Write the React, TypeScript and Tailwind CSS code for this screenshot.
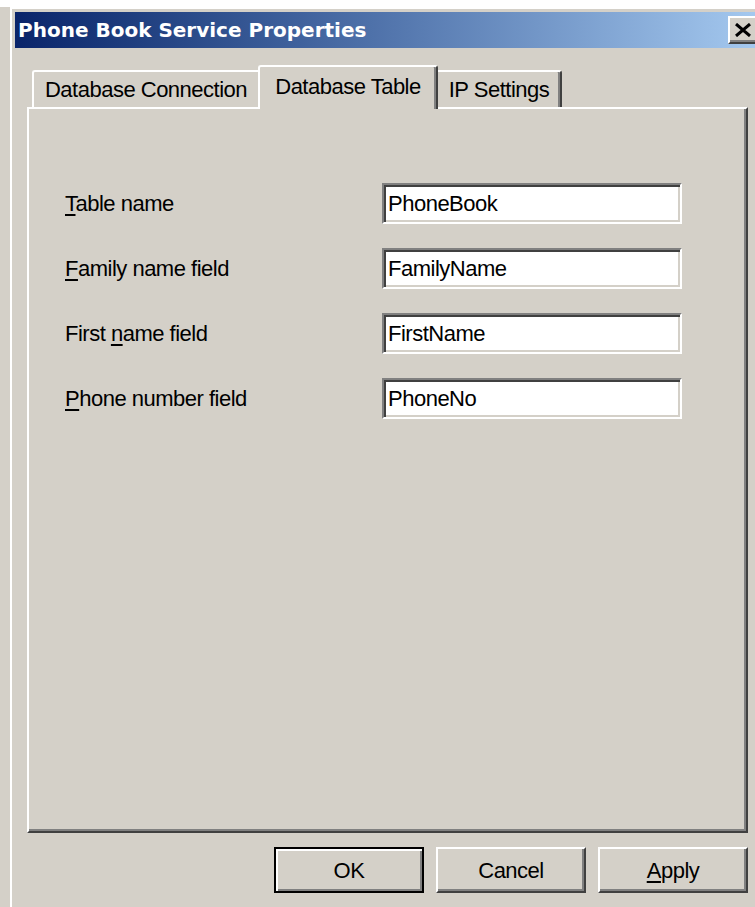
import React from "react";

const ui = { fontFamily: '"Liberation Sans", Arial, sans-serif' };
const caption = { fontFamily: '"DejaVu Sans", Verdana, sans-serif' };

function Key({ children }: { children: React.ReactNode }) {
  return <span className="underline decoration-2 underline-offset-[3px]">{children}</span>;
}

const fields: { label: React.ReactNode; value: string }[] = [
  { label: <><Key>T</Key>able name</>, value: "PhoneBook" },
  { label: <><Key>F</Key>amily name field</>, value: "FamilyName" },
  { label: <>First <Key>n</Key>ame field</>, value: "FirstName" },
  { label: <><Key>P</Key>hone number field</>, value: "PhoneNo" },
];

function Button({ children, primary }: { children: React.ReactNode; primary?: boolean }) {
  return (
    <button
      className={
        primary
          ? "w-[150px] h-[46px] bg-[#d4d0c8] border-2 border-black shadow-[inset_2px_2px_0_#ffffff,inset_-2px_-2px_0_#808080] text-[22px] tracking-[-0.5px] text-black"
          : "w-[150px] h-[46px] bg-[#d4d0c8] border-2 border-t-white border-l-white border-r-[#404040] border-b-[#404040] shadow-[inset_-2px_-2px_0_#808080] text-[22px] tracking-[-0.5px] text-black"
      }
      style={ui}
    >
      {children}
    </button>
  );
}

export default function App() {
  return (
    <div className="w-[755px] h-[907px] overflow-hidden bg-[#d4d0c8] flex flex-col" style={ui}>
      <div className="h-[7px] bg-white shrink-0" />
      <div className="ml-[10px] w-[755px] flex-1 border-t-2 border-l-2 border-white p-[3px] bg-[#d4d0c8]">
        {/* caption bar */}
        <div className="h-[36px] bg-gradient-to-r from-[#0a246a] to-[#a6caf0] flex items-center justify-between pl-[3px] pr-[2px]">
          <span className="text-white font-bold text-[20px] leading-none" style={caption}>
            Phone Book Service Properties
          </span>
          <div className="w-[32px] h-[28px] bg-[#d4d0c8] border-2 border-t-white border-l-white border-r-[#404040] border-b-[#404040] shadow-[inset_-2px_-2px_0_#808080] flex items-center justify-center">
            <svg width="18" height="14" viewBox="0 0 18 14" className="-ml-[2px] -mt-[1px]">
              <path d="M2 1 L16 13 M16 1 L2 13" stroke="#000" strokeWidth="3" fill="none" />
            </svg>
          </div>
        </div>

        <div className="px-[12px] pt-[17px]">
          {/* tabs */}
          <div className="flex items-end h-[42px] pl-[5px]">
            <div className="w-[226px] h-[37px] border-t-2 border-l-2 border-white rounded-tl-[3px] flex items-center justify-center text-[22px] tracking-[-0.5px] text-black">
              Database Connection
            </div>
            <div className="relative z-10 -mb-[2px] w-[180px] h-[44px] bg-[#d4d0c8] border-t-2 border-l-2 border-white border-r-2 border-r-[#404040] rounded-t-[3px] shadow-[inset_-2px_0_0_#808080] flex items-center justify-center pb-[4px] text-[22px] tracking-[-0.5px] text-black">
              Database Table
            </div>
            <div className="w-[124px] h-[37px] border-t-2 border-white border-r-2 border-r-[#404040] rounded-tr-[3px] shadow-[inset_-2px_0_0_#808080] flex items-center justify-center text-[22px] tracking-[-0.5px] text-black">
              IP Settings
            </div>
          </div>

          {/* tab page */}
          <div className="w-[721px] h-[726px] border-2 border-t-white border-l-white border-r-[#404040] border-b-[#404040] shadow-[inset_-2px_-2px_0_#808080] pt-[74px] pl-[36px]">
            <div className="grid grid-cols-[317px_300px] gap-y-[24px]">
              {fields.map((f, i) => (
                <React.Fragment key={i}>
                  <div className="h-[41px] flex items-center text-[22px] tracking-[-0.5px] text-black">
                    <span>{f.label}</span>
                  </div>
                  <div className="h-[41px] bg-white border-2 border-t-[#808080] border-l-[#808080] border-r-white border-b-white shadow-[inset_2px_2px_0_#404040,inset_-2px_-2px_0_#d4d0c8] flex items-center pl-[4px] text-[22px] tracking-[-0.5px] text-black">
                    {f.value}
                  </div>
                </React.Fragment>
              ))}
            </div>
          </div>

          {/* dialog buttons */}
          <div className="w-[721px] mt-[14px] flex justify-end gap-[12px]">
            <Button primary>OK</Button>
            <Button>Cancel</Button>
            <Button>
              <Key>A</Key>pply
            </Button>
          </div>
        </div>
      </div>
    </div>
  );
}
